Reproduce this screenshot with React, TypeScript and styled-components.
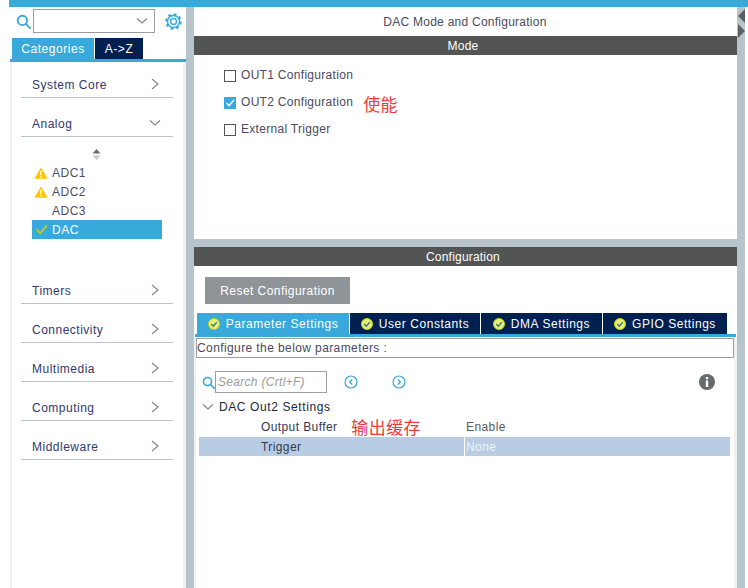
import styled, { createGlobalStyle } from 'styled-components';

const GlobalStyle = createGlobalStyle`
  html, body {
    margin: 0;
    padding: 0;
    background: #fff;
  }
  body {
    font-family: "Liberation Sans", Arial, "Noto Sans CJK SC", sans-serif;
    font-size: 12px;
    color: #4a4a5c;
  }
`;

const Page = styled.div`
  width: 748px;
  height: 588px;
  overflow: hidden;
  padding-left: 9px;
  box-sizing: border-box;
  display: flex;
  flex-direction: column;
`;

const TopBar = styled.div`
  height: 7px;
  flex: none;
  background: #39a9dc;
`;

const Main = styled.div`
  flex: 1;
  display: flex;
  min-height: 0;
`;

const Sidebar = styled.div`
  width: 177px;
  flex: none;
  display: flex;
  flex-direction: column;
`;

const SearchRow = styled.div`
  height: 24px;
  margin-top: 2px;
  padding-left: 7px;
  display: flex;
  align-items: center;
`;

const SelectBox = styled.div`
  width: 122px;
  height: 24px;
  margin-left: 2px;
  box-sizing: border-box;
  border: 1px solid #9a9ea2;
  display: flex;
  align-items: center;
  justify-content: flex-end;
  padding-right: 6px;
`;

const GearWrap = styled.div`
  margin-left: 10px;
  display: flex;
`;

const SideTabs = styled.div`
  display: flex;
  gap: 1px;
  margin: 5px 0 0 3px;
  height: 21px;
`;

const Tab = styled.div<{ $active?: boolean; $w: number }>`
  width: ${p => p.$w}px;
  height: 100%;
  flex: none;
  box-sizing: border-box;
  background: ${p => (p.$active ? '#39a9dc' : '#002052')};
  color: #fff;
  font-size: 12px;
  letter-spacing: 0.55px;
  display: flex;
  align-items: center;
  justify-content: center;
  gap: 6px;
`;

const SideLine = styled.div`
  height: 3px;
  margin-left: 1px;
  flex: none;
  background: #39a9dc;
`;

const SidePanel = styled.div`
  flex: 1;
  margin-left: 1px;
  box-sizing: border-box;
  border-left: 2px solid #f0f1f2;
  border-right: 3px solid #f0f1f2;
  padding: 0 10px 0 9px;
`;

const Category = styled.div`
  height: 39px;
  box-sizing: border-box;
  border-bottom: 1px solid #b8c4cc;
  padding: 0 12px 5px 11px;
  display: flex;
  align-items: flex-end;
  justify-content: space-between;
  color: #33386b;
  font-size: 12px;
  letter-spacing: 0.5px;
  line-height: 14px;

  &:first-child {
    height: 36px;
  }
`;

const ChevronBox = styled.span`
  display: flex;
  margin-bottom: 2px;
`;

const SubList = styled.div`
  height: 128px;
  padding-left: 11px;
  display: flex;
  flex-direction: column;
`;

const SortHandle = styled.div`
  display: flex;
  justify-content: center;
  width: 128px;
  margin-top: 12px;
  height: 14px;
`;

const SubItem = styled.div<{ $active?: boolean }>`
  width: 130px;
  height: 19px;
  flex: none;
  display: flex;
  align-items: center;
  background: ${p => (p.$active ? '#39a9dc' : 'transparent')};
  color: ${p => (p.$active ? '#fff' : '#4d4d68')};
  font-size: 12px;
  letter-spacing: 0.5px;
`;

const SubIcon = styled.span`
  width: 18px;
  margin-right: 2px;
  flex: none;
  display: flex;
  justify-content: center;
`;

const Gutter = styled.div`
  width: 8px;
  flex: none;
  background: #b8c4cc;
`;

const Content = styled.div`
  width: 543px;
  flex: none;
  display: flex;
  flex-direction: column;
`;

const Title = styled.div`
  height: 29px;
  display: flex;
  align-items: center;
  justify-content: center;
  padding-right: 1px;
  color: #4a4a5c;
  letter-spacing: 0.25px;
`;

const SectionBar = styled.div`
  height: 19px;
  flex: none;
  background: #535554;
  color: #fff;
  display: flex;
  align-items: center;
  justify-content: center;
  letter-spacing: 0.2px;
  padding-right: 5px;
`;

const ModePanel = styled.div`
  height: 184px;
  flex: none;
  box-sizing: border-box;
  padding: 10px 0 0 30px;
  display: flex;
  flex-direction: column;
  gap: 7px;
`;

const CheckRow = styled.div`
  height: 20px;
  display: flex;
  align-items: center;
  letter-spacing: 0.3px;
`;

const CheckBox = styled.span<{ $checked?: boolean }>`
  width: 12px;
  height: 12px;
  flex: none;
  margin: 1px 5px 0 0;
  box-sizing: border-box;
  border: ${p => (p.$checked ? 'none' : '1px solid #555')};
  background: ${p => (p.$checked ? '#39a9dc' : '#fff')};
  display: flex;
  align-items: center;
  justify-content: center;
`;

const Note = styled.span`
  color: #f03a3a;
  font-size: 17px;
  line-height: 20px;
  font-family: "Noto Sans CJK SC", sans-serif;
`;

const ModeNote = styled(Note)`
  margin: 4px 0 0 10px;
`;

const SectionGap = styled.div`
  height: 8px;
  flex: none;
  background: #b8c4cc;
`;

const ConfigPanel = styled.div`
  flex: 1;
  min-height: 0;
  display: flex;
  flex-direction: column;
`;

const ResetButton = styled.button`
  width: 145px;
  height: 27px;
  flex: none;
  margin: 11px 0 0 11px;
  border: none;
  padding: 0;
  background: #8f9499;
  color: #fff;
  font-family: inherit;
  font-size: 12px;
  letter-spacing: 0.45px;
`;

const ConfigTabs = styled.div`
  display: flex;
  gap: 1px;
  margin: 9px 0 0 3px;
  height: 21px;
`;

const TabLine = styled.div`
  height: 3px;
  flex: none;
  margin: 0 1px;
  background: #39a9dc;
`;

const ParamBody = styled.div`
  flex: 1;
  min-height: 0;
  box-sizing: border-box;
  border-left: 2px solid #f0f1f2;
  border-right: 3px solid #f0f1f2;
  padding-top: 1px;
`;

const HintBox = styled.div`
  height: 20px;
  box-sizing: border-box;
  border: 1px solid #999da0;
  display: flex;
  align-items: center;
  letter-spacing: 0.4px;
`;

const SearchLine = styled.div`
  height: 22px;
  margin-top: 13px;
  padding-left: 6px;
  display: flex;
  align-items: center;
`;

const SearchInput = styled.div`
  width: 112px;
  height: 22px;
  box-sizing: border-box;
  border: 1px solid #999da0;
  padding-left: 2px;
  display: flex;
  align-items: center;
  color: #9a9a9a;
  font-style: italic;
  letter-spacing: 0.3px;
`;

const NavButtons = styled.div`
  margin-left: 17px;
  display: flex;
  gap: 34px;
`;

const InfoWrap = styled.div`
  margin-left: auto;
  margin-right: 19px;
  display: flex;
`;

const TreeHead = styled.div`
  height: 19px;
  margin-top: 3px;
  padding: 1px 0 0 6px;
  display: flex;
  align-items: center;
  gap: 5px;
  color: #222838;
  letter-spacing: 0.6px;
`;

const ParamRow = styled.div<{ $selected?: boolean }>`
  height: 19px;
  margin: 1px 4px 0 3px;
  display: grid;
  grid-template-columns: 265px 2px 1fr;
  align-items: center;
  background: ${p => (p.$selected ? '#b8cde3' : 'transparent')};
  color: #33384f;
  letter-spacing: 0.4px;
`;

const ParamName = styled.div`
  padding-left: 62px;
  display: flex;
  align-items: center;
`;

const ParamNote = styled(Note)`
  margin-left: 14px;
`;

const ParamDivider = styled.div<{ $show?: boolean }>`
  height: 100%;
  width: 1px;
  background: ${p => (p.$show ? '#fff' : 'transparent')};
`;

const ParamValue = styled.div<{ $muted?: boolean }>`
  color: ${p => (p.$muted ? '#eef3f9' : '#5a5a5a')};
`;

const RightRail = styled.div`
  width: 8px;
  flex: none;
  background: #b8c4cc;
  display: flex;
  flex-direction: column;
  gap: 1px;
  padding: 2px 0 0 1px;
  box-sizing: border-box;
`;

const Chevron = ({ down }: { down?: boolean }) => (
  <svg width="12" height="12" viewBox="0 0 12 12" fill="none" stroke="#808488" strokeWidth="1.1">
    {down ? <path d="M1 3.5 L6 8 L11 3.5" /> : <path d="M3 1 L9 6 L3 11" />}
  </svg>
);

const SearchIcon = ({ size }: { size: number }) => (
  <svg width={size} height={size} viewBox="0 0 16 16" fill="none" stroke="#39a9dc" strokeWidth="2">
    <circle cx="6.8" cy="6.8" r="5" />
    <path d="M10.5 10.5 L15 15" strokeLinecap="round" />
  </svg>
);

const GearIcon = () => (
  <svg width="17" height="17" viewBox="0 0 17 17" fill="none" stroke="#39a9dc">
    <circle cx="8.5" cy="8.5" r="6" strokeWidth="1.5" />
    <circle cx="8.5" cy="8.5" r="7.2" strokeWidth="2.2" strokeDasharray="2.8 2.85" />
    <circle cx="8.5" cy="8.5" r="3" strokeWidth="1.4" />
  </svg>
);

const WarnIcon = () => (
  <svg width="14" height="12" viewBox="0 0 14 12">
    <path d="M7 0.5 L13.7 11.7 H0.3 Z" fill="#fdc600" />
    <rect x="6.3" y="3.8" width="1.4" height="4.4" fill="#fff" />
    <rect x="6.3" y="9" width="1.4" height="1.5" fill="#fff" />
  </svg>
);

const CheckMark = ({ color, size }: { color: string; size: number }) => (
  <svg width={size} height={size} viewBox="0 0 12 12" fill="none" stroke={color} strokeWidth="1.8">
    <path d="M1.5 6 L4.8 9.3 L10.8 2.5" />
  </svg>
);

const TabCheck = () => (
  <svg width="12" height="12" viewBox="0 0 13 13" fill="none">
    <circle cx="6.5" cy="6.5" r="6" fill="#e6f07a" stroke="#c3d000" />
    <path d="M3.5 6.5 L5.8 8.8 L9.5 4.5" stroke="#39766e" strokeWidth="1.5" />
  </svg>
);

const SortIcon = () => (
  <svg width="9" height="11" viewBox="0 0 9 11">
    <path d="M4.5 0 L8.5 4.5 H0.5 Z" fill="#6b6b6b" />
    <path d="M4.5 11 L8.5 6.5 H0.5 Z" fill="#c8c8c8" />
  </svg>
);

const NavIcon = ({ next }: { next?: boolean }) => (
  <svg width="14" height="14" viewBox="0 0 14 14" fill="none" stroke="#39a9dc" strokeWidth="1.2">
    <circle cx="7" cy="7" r="6" />
    <path d={next ? 'M5.8 4.5 L8.3 7 L5.8 9.5' : 'M8.2 4.5 L5.7 7 L8.2 9.5'} strokeWidth="1.4" />
  </svg>
);

const InfoIcon = () => (
  <svg width="16" height="16" viewBox="0 0 16 16">
    <circle cx="8" cy="8" r="8" fill="#666a6d" />
    <rect x="6.8" y="3" width="2.4" height="2.3" fill="#fff" />
    <rect x="6.8" y="6.5" width="2.4" height="6.5" fill="#fff" />
  </svg>
);

const RailArrow = ({ right }: { right?: boolean }) => (
  <svg width="7" height="14" viewBox="0 0 7 14">
    <path d={right ? 'M0 0 L7 7 L0 14 Z' : 'M7 0 L0 7 L7 14 Z'} fill="#5c6064" />
  </svg>
);

const bottomCategories = ['Timers', 'Connectivity', 'Multimedia', 'Computing', 'Middleware'];
const configTabs = [
  { label: 'Parameter Settings', w: 152, active: true },
  { label: 'User Constants', w: 130 },
  { label: 'DMA Settings', w: 121 },
  { label: 'GPIO Settings', w: 124 },
];

export default function App() {
  return (
    <Page>
      <GlobalStyle />
      <TopBar />
      <Main>
        <Sidebar>
          <SearchRow>
            <SearchIcon size={15} />
            <SelectBox>
              <Chevron down />
            </SelectBox>
            <GearWrap>
              <GearIcon />
            </GearWrap>
          </SearchRow>
          <SideTabs>
            <Tab $active $w={82}>Categories</Tab>
            <Tab $w={48}>A-&gt;Z</Tab>
          </SideTabs>
          <SideLine />
          <SidePanel>
            <Category>
              System Core
              <ChevronBox><Chevron /></ChevronBox>
            </Category>
            <Category>
              Analog
              <ChevronBox><Chevron down /></ChevronBox>
            </Category>
            <SubList>
              <SortHandle><SortIcon /></SortHandle>
              <SubItem><SubIcon><WarnIcon /></SubIcon>ADC1</SubItem>
              <SubItem><SubIcon><WarnIcon /></SubIcon>ADC2</SubItem>
              <SubItem><SubIcon />ADC3</SubItem>
              <SubItem $active><SubIcon><CheckMark color="#b9cc1e" size={13} /></SubIcon>DAC</SubItem>
            </SubList>
            {bottomCategories.map(name => (
              <Category key={name}>
                {name}
                <ChevronBox><Chevron /></ChevronBox>
              </Category>
            ))}
          </SidePanel>
        </Sidebar>
        <Gutter />
        <Content>
          <Title>DAC Mode and Configuration</Title>
          <SectionBar>Mode</SectionBar>
          <ModePanel>
            <CheckRow><CheckBox />OUT1 Configuration</CheckRow>
            <CheckRow>
              <CheckBox $checked><CheckMark color="#fff" size={10} /></CheckBox>
              OUT2 Configuration
              <ModeNote>使能</ModeNote>
            </CheckRow>
            <CheckRow><CheckBox />External Trigger</CheckRow>
          </ModePanel>
          <SectionGap />
          <SectionBar>Configuration</SectionBar>
          <ConfigPanel>
            <ResetButton>Reset Configuration</ResetButton>
            <ConfigTabs>
              {configTabs.map(t => (
                <Tab key={t.label} $w={t.w} $active={t.active}>
                  <TabCheck />
                  {t.label}
                </Tab>
              ))}
            </ConfigTabs>
            <TabLine />
            <ParamBody>
              <HintBox>Configure the below parameters :</HintBox>
              <SearchLine>
                <SearchIcon size={13} />
                <SearchInput>Search (Crtl+F)</SearchInput>
                <NavButtons>
                  <NavIcon />
                  <NavIcon next />
                </NavButtons>
                <InfoWrap><InfoIcon /></InfoWrap>
              </SearchLine>
              <TreeHead>
                <Chevron down />
                DAC Out2 Settings
              </TreeHead>
              <ParamRow>
                <ParamName>
                  Output Buffer
                  <ParamNote>输出缓存</ParamNote>
                </ParamName>
                <ParamDivider />
                <ParamValue>Enable</ParamValue>
              </ParamRow>
              <ParamRow $selected>
                <ParamName>Trigger</ParamName>
                <ParamDivider $show />
                <ParamValue $muted>None</ParamValue>
              </ParamRow>
            </ParamBody>
          </ConfigPanel>
        </Content>
        <RightRail>
          <RailArrow />
          <RailArrow right />
        </RightRail>
      </Main>
    </Page>
  );
}
